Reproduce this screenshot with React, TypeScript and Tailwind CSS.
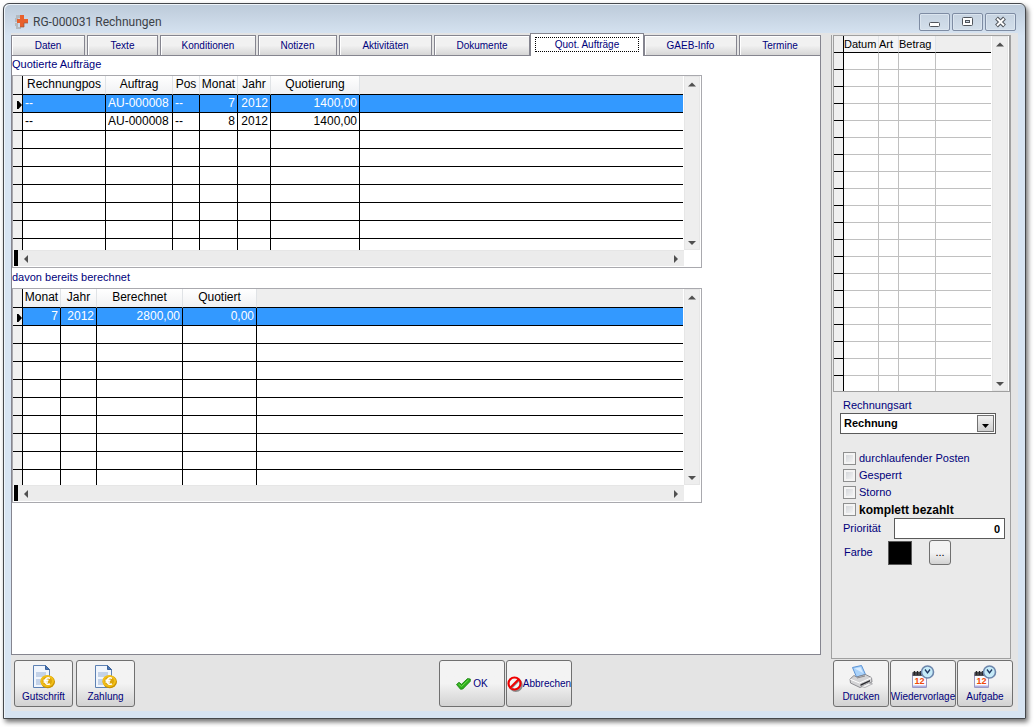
import React from "react";
import clsx from "clsx";

type Column = {
  title: string;
  width?: string;
  align?: string;
};

const tabs = [
  { title: "Daten", size: "basis-[74px] mr-0.5" },
  { title: "Texte", size: "basis-[71px] mr-0.5" },
  { title: "Konditionen", size: "basis-[96px] mr-0.5" },
  { title: "Notizen", size: "basis-[79px] mr-0.5" },
  { title: "Aktivitäten", size: "basis-[93px] mr-0.5" },
  { title: "Dokumente", size: "basis-[96px]" },
  { title: "Quot. Aufträge", size: "basis-[114px]", active: true },
  { title: "GAEB-Info", size: "basis-[93px] mr-0.5" },
  { title: "Termine", size: "basis-[82px]" },
];

const orderColumns: Column[] = [
  { title: "Rechnungpos", width: "w-[83px]", align: "text-left" },
  { title: "Auftrag", width: "w-[67px]", align: "text-left" },
  { title: "Pos", width: "w-[27px]", align: "text-left" },
  { title: "Monat", width: "w-[38px]", align: "text-right" },
  { title: "Jahr", width: "w-[33px]", align: "text-right" },
  { title: "Quotierung", width: "w-[89px]", align: "text-right" },
];

const orderRows = [
  ["--", "AU-000008", "--", "7", "2012", "1400,00"],
  ["--", "AU-000008", "--", "8", "2012", "1400,00"],
];

const billedColumns: Column[] = [
  { title: "Monat", width: "w-[38px]", align: "text-right" },
  { title: "Jahr", width: "w-[36px]", align: "text-right" },
  { title: "Berechnet", width: "w-[86px]", align: "text-right" },
  { title: "Quotiert", width: "w-[74px]", align: "text-right" },
];

const billedRows = [["7", "2012", "2800,00", "0,00"]];

const paymentColumns: Column[] = [
  { title: "Datum", width: "w-[35px]" },
  { title: "Art", width: "w-[20px]" },
  { title: "Betrag", width: "w-[37px]" },
];

const arrows = {
  up: "M0 5.5 L4 1.5 L8 5.5z",
  down: "M0 2 L8 2 L4 6z",
  left: "M6 0 L6 8 L2 4z",
  right: "M2 0 L2 8 L6 4z",
};

const ScrollArrow = ({ dir }: { dir: keyof typeof arrows }) => (
  <svg className="size-2 shrink-0" viewBox="0 0 8 8">
    <path d={arrows[dir]} fill="#505050" />
  </svg>
);

const VerticalBar = () => (
  <div className="flex w-4 shrink-0 flex-col items-center justify-between border border-[#e6e6e6] bg-[#eeeeee] pt-1 pb-0.5">
    <ScrollArrow dir="up" />
    <ScrollArrow dir="down" />
  </div>
);

const HorizontalBar = () => (
  <div className="mr-[17px] flex h-4 pl-px">
    <div className="w-1 bg-black" />
    <div className="flex grow items-center justify-between border-t border-[#e6e6e6] bg-[#ececec] px-1">
      <ScrollArrow dir="left" />
      <ScrollArrow dir="right" />
    </div>
  </div>
);

type DataGridProps = {
  label: string;
  columns: Column[];
  rows: string[][];
  emptyRows: number;
  lastRow: string;
};

const DataGrid = ({ label, columns, rows, emptyRows, lastRow }: DataGridProps) => {
  const total = rows.length + emptyRows;

  return (
    <div className="mr-[118px] border border-[#a9a9ae] bg-white pb-px">
      <div className="flex pr-px">
        <table
          aria-label={label}
          className="mr-px w-full table-fixed border-separate border-spacing-0 text-[12px] leading-[17px] text-black"
        >
          <thead>
            <tr className="h-[19px] bg-[#eeeeee]">
              <td className="w-2.5 border-r border-b border-black bg-[#f0f0f0] p-0" />
              {columns.map((column) => (
                <th
                  key={column.title}
                  scope="col"
                  className={clsx(
                    "border-r border-b border-r-[#e0e3e6] border-b-black bg-linear-to-b from-white to-[#f0f1f3] px-0 pt-0 pb-0.5 text-center leading-4 font-normal whitespace-nowrap",
                    column.width
                  )}
                >
                  {column.title}
                </th>
              ))}
              <td className="border-b border-black p-0" />
            </tr>
          </thead>
          <tbody>
            {Array.from({ length: total + 1 }, (_, r) => {
              const last = r === total;
              const line = last ? "border-black" : "border-b border-black";
              return (
                <tr
                  key={r}
                  className={clsx(
                    last ? lastRow : "h-[18px]",
                    r === 0 && "bg-[#3399ff] text-white"
                  )}
                >
                  <td className={clsx("border-r bg-[#f0f0f0] p-0", line)}>
                    {r === 0 && (
                      <svg className="mt-0.5 ml-1 h-2 w-[5px]" viewBox="0 0 5 8">
                        <path d="M0 0 L1.5 0 L5 4 L1.5 8 L0 8z" fill="#000" />
                      </svg>
                    )}
                  </td>
                  {columns.map((column, c) => (
                    <td
                      key={column.title}
                      className={clsx(
                        "border-r px-0.5 py-0 whitespace-nowrap",
                        line,
                        column.align
                      )}
                    >
                      {rows[r]?.[c]}
                    </td>
                  ))}
                  <td className={clsx("p-0", line)} />
                </tr>
              );
            })}
          </tbody>
        </table>
        <VerticalBar />
      </div>
      <HorizontalBar />
    </div>
  );
};

const PaymentGrid = () => (
  <div className="flex border border-[#a0a0a0] bg-white pr-px">
    <table
      aria-label="Zahlungen"
      className="mr-px w-full table-fixed border-separate border-spacing-0 text-[11px] leading-4 text-black"
    >
      <thead>
        <tr className="h-[17px] bg-[#eeeeee]">
          <td className="w-2.5 border-r border-b border-black p-0" />
          {paymentColumns.map((column) => (
            <th
              key={column.title}
              scope="col"
              className={clsx(
                "border-r border-b border-r-[#e0e3e6] border-b-black bg-[#f4f4f5] p-0 text-left font-normal",
                column.width
              )}
            >
              {column.title}
            </th>
          ))}
          <td className="border-b border-black p-0" />
        </tr>
      </thead>
      <tbody>
        {Array.from({ length: 20 }, (_, r) => {
          const last = r === 19;
          return (
            <tr key={r} className={last ? "h-[15px]" : "h-[17px]"}>
              <td
                className={clsx(
                  "border-r border-black bg-[#f0f0f0] p-0",
                  !last && "border-b"
                )}
              />
              {paymentColumns.map((column) => (
                <td
                  key={column.title}
                  className={clsx("border-r border-[#c0c0c0] p-0", !last && "border-b")}
                />
              ))}
              <td className={clsx("border-[#c0c0c0] p-0", !last && "border-b")} />
            </tr>
          );
        })}
      </tbody>
    </table>
    <VerticalBar />
  </div>
);

const LogoIcon = () => (
  <svg className="size-4" viewBox="0 0 16 16">
    <path d="M2 1h4v3H4v4H1V4h1z M1 9h3v4h3v2H2v-3H1z" fill="#b4b9be" />
    <path d="M6 1h4v4h4v4h-4v4H6V9H3V5h3z" fill="#e8602c" />
    <path d="M6 13h4V9h4" fill="none" stroke="#9a5a40" strokeWidth="0.7" />
  </svg>
);

const InvoiceIcon = () => (
  <svg className="size-6" viewBox="0 0 24 24">
    <path d="M1.5 0.5h12l4 4v18h-16z" fill="#f0f5fc" stroke="#5d81b3" />
    <path d="M13.5 0.5v4h4z" fill="#4a78b8" stroke="#3c639c" />
    <path d="M4 7h10v5H4z M4 14h5v6H4z" fill="#c3d2e8" />
    <ellipse cx="15.8" cy="16.8" rx="7.2" ry="6.4" fill="#c89200" />
    <ellipse cx="15.2" cy="16" rx="6.8" ry="6" fill="#f2bf18" />
    <ellipse cx="15.2" cy="16" rx="4.8" ry="4.300" fill="#dca60c" />
    <path
      d="M18 13.300c-3-1.500-5 .6-5 2.800s2 4.200 5 2.700 M11.500 15.300h5 M11.500 17h4.500"
      fill="none"
      stroke="#fff"
      strokeWidth="1.5"
    />
  </svg>
);

const CheckIcon = () => (
  <svg className="h-3 w-[15px]" viewBox="0 0 15 12">
    <path
      d="M0.5 6.5 L3 4.3 L5.5 6.3 L11.5 0.6 L14.3 1 L14.3 3.3 L6.8 11 L4.5 11.3z"
      fill="#2fae1c"
      stroke="#15800c"
      strokeWidth="0.8"
    />
    <path d="M2.5 6 L5.5 8.5 L12.5 1.8" fill="none" stroke="#6edb50" />
  </svg>
);

const ForbiddenIcon = () => (
  <svg className="size-4 shrink-0" viewBox="0 0 16 16">
    <circle cx="8.8" cy="9" r="6" fill="none" stroke="#8c8c8c" strokeWidth="2" />
    <circle cx="7.5" cy="7.5" r="6" fill="#f4f4f4" stroke="#f00000" strokeWidth="2.2" />
    <path d="M4.5 12.2 L12 4.8" stroke="#8c8c8c" strokeWidth="1.5" />
    <path d="M3.5 11.5 L11.5 3.5" stroke="#f00000" strokeWidth="2.2" />
  </svg>
);

const PrinterIcon = () => (
  <svg className="size-6" viewBox="0 0 24 24">
    <path d="M3.5 2.5 L12.5 0.5 L16.5 9.5 L7.5 12z" fill="#a9d2fa" stroke="#5b93d6" />
    <path d="M5.5 3.5 L11.5 2.2 L14 8z" fill="#d8ecff" />
    <path
      d="M1 14 L5 10.5 L7.5 12 L16.5 9.5 L22.5 12.5 L23 17 L11 22.5 L1.5 18z"
      fill="#d4d4d6"
      stroke="#77777c"
      strokeWidth="0.8"
    />
    <path d="M1.2 14.2 L10.5 18 L22.5 12.7" fill="none" stroke="#fff" />
    <path d="M11.5 19.3 L21 15 L21 16.5 L11.5 21z" fill="#2f2f33" />
    <path
      d="M12 21.5 L19.5 18 L23.5 18.8 L16 22.5z"
      fill="#f5f5f5"
      stroke="#8c8c90"
      strokeWidth="0.6"
    />
    <path d="M8 13 L16 11" stroke="#88888c" />
  </svg>
);

const ReminderIcon = () => (
  <svg className="size-6" viewBox="0 0 24 24">
    <path d="M1.5 8.5h14v14h-14z" fill="#fbfbff" stroke="#9a9ac4" />
    <path d="M1.500 7h14v4h-14z" fill="#505055" />
    <path d="M3.500 6v4 M6.500 6v4 M9.500 6v4" stroke="#26262a" strokeWidth="1.5" />
    <text
      x="8.5"
      y="19"
      textAnchor="middle"
      fontSize="9"
      fontWeight="bold"
      fontFamily="Liberation Sans, sans-serif"
      fill="#f04808"
    >
      12
    </text>
    <path d="M2 20.5h13v1.5H2z" fill="#b0aee0" />
    <circle cx="16.5" cy="7" r="6" fill="#c6ebf8" stroke="#6c86ac" strokeWidth="1.6" />
    <path d="M14 4.5 L16.5 8 L19 4.5" fill="none" stroke="#203860" strokeWidth="1.3" />
  </svg>
);

type ActionProps = {
  icon: React.ReactNode;
  text: string;
  className: string;
};

const ActionButton = ({ icon, text, className }: ActionProps) => (
  <button
    type="button"
    className={clsx(
      "flex h-[47px] items-center justify-center rounded-[3px] border border-[#707070] bg-linear-to-b from-[#f3f3f3] from-50% to-[#d2d2d2] text-[10px] leading-3 whitespace-nowrap text-[#00007b]",
      className
    )}
  >
    {icon}
    <span>{text}</span>
  </button>
);

const WindowButton = ({ label, children }: { label: string; children: React.ReactNode }) => (
  <button
    type="button"
    aria-label={label}
    className="flex h-[18px] w-[31px] items-center justify-center rounded-[2px] border border-[#7e8ca3] bg-linear-to-b from-[#c6d3e1] to-[#d3dfeb] shadow-[inset_0_0_0_1px_#dbe5ef]"
  >
    <svg className="h-3 w-[13px]" viewBox="0 0 13 12">
      {children}
    </svg>
  </button>
);

const CheckRow = ({ text, strong }: { text: string; strong?: boolean }) => (
  <label
    className={clsx(
      "flex h-[17px] items-center gap-[3px]",
      strong ? "text-[12px] font-bold text-black" : "text-[11px]"
    )}
  >
    <input
      type="checkbox"
      className="size-[13px] appearance-none border border-[#8e8f8f] bg-linear-to-br from-[#cdd0d4] to-[#fafafa] shadow-[inset_0_0_0_2px_#f4f4f4] checked:bg-[#00007b]"
    />
    {text}
  </label>
);

const SidePanel = () => (
  <aside className="mt-0.5 w-[180px] shrink-0 border border-t-0 border-[#a0a0a0] bg-[#eaeaea] pl-px text-[11px] text-[#00007b]">
    <PaymentGrid />
    <div className="pt-[5px] pr-[5px] pl-[7px]">
      <label htmlFor="kind" className="block pl-[3px] leading-4">
        Rechnungsart
      </label>
      <div className="relative mr-[9px]">
        <select
          id="kind"
          className="block h-[21px] w-full appearance-none border border-[#5a5a5a] bg-white pl-[3px] text-[11px] font-bold text-black"
        >
          <option>Rechnung</option>
        </select>
        <span className="pointer-events-none absolute top-0.5 right-0.5 flex h-[17px] w-[17px] items-center justify-center border border-[#707070] bg-linear-to-b from-[#f2f2f2] to-[#cfcfcf]">
          <svg className="mt-1 h-1 w-[7px]" viewBox="0 0 7 4">
            <path d="M0 0h7L3.5 4z" fill="#000" />
          </svg>
        </span>
      </div>
      <div className="mt-4 pl-[3px]">
        <CheckRow text="durchlaufender Posten" />
        <CheckRow text="Gesperrt" />
        <CheckRow text="Storno" />
        <CheckRow text="komplett bezahlt" strong />
      </div>
      <div className="flex items-center pl-[3px]">
        <label htmlFor="priority" className="w-[51px] shrink-0">
          Priorität
        </label>
        <input
          id="priority"
          defaultValue="0"
          className="h-[21px] w-full min-w-0 border border-[#5a5a5a] bg-white pr-1 text-right text-[11px] font-bold text-black"
        />
      </div>
      <div className="mt-px flex items-center pl-1">
        <label htmlFor="color" className="w-11">
          Farbe
        </label>
        <span className="size-6 border border-[#5a5a5a] bg-black" />
        <button
          id="color"
          type="button"
          className="ml-[17px] h-[25px] w-[22px] rounded-[3px] border border-[#707070] bg-linear-to-b from-[#f3f3f3] from-50% to-[#d2d2d2] text-black"
        >
          ...
        </button>
      </div>
    </div>
  </aside>
);

const App = () => {
  return (
    <div className="flex min-h-screen bg-white pt-[3px] pr-2 pb-2 pl-[3px] font-['Liberation_Sans',Arial,sans-serif]">
      <div className="flex min-w-0 grow flex-col rounded-t-md border border-[#45484c] bg-[linear-gradient(to_bottom,#bccad9,#d7e4f2_32px)] px-[7px] pb-[7px] shadow-[2px_3px_5px_#00000090,inset_1px_1px_0_#eef4fa]">
        {/* Title bar */}
        <header className="flex h-[29px] items-center pt-1.5 pr-0.5 pl-[3px]">
          <LogoIcon />
          <h1 className="ml-[3px] grow font-[Roboto,sans-serif] text-[12px] text-[#3c4248]">
            RG-000031 Rechnungen
          </h1>
          <div className="flex gap-0.5">
            <WindowButton label="Minimieren">
              <rect x="1.5" y="6.5" width="10" height="4" rx="1" fill="#fff" stroke="#50555c" />
            </WindowButton>
            <WindowButton label="Maximieren">
              <rect x="1.5" y="1.5" width="10" height="8" rx="1" fill="#fff" stroke="#50555c" />
              <rect x="4.5" y="4.5" width="4" height="2" fill="#c9d5e2" stroke="#50555c" />
            </WindowButton>
            <WindowButton label="Schließen">
              <path d="M2.5 2 L10.5 10 M10.5 2 L2.5 10" stroke="#50555c" strokeWidth="4" />
              <path d="M3 2.5 L10 9.5 M10 2.5 L3 9.5" stroke="#fff" strokeWidth="2" />
            </WindowButton>
          </div>
        </header>

        <div className="flex grow flex-col bg-[#e4e4e4] pb-1">
          <div className="flex grow gap-2.5">
            <main className="flex min-w-0 grow flex-col pb-1">
              {/* Tabs */}
              <div role="tablist" className="flex h-[22px] items-end">
                {tabs.map((tab) => (
                  <button
                    key={tab.title}
                    type="button"
                    role="tab"
                    aria-selected={!!tab.active}
                    className={clsx(
                      "shrink grow border border-b-0 border-[#85858f] text-[10px] whitespace-nowrap text-[#00007b]",
                      tab.size,
                      tab.active
                        ? "relative z-10 -mb-px h-[23px] bg-white px-1 pb-1"
                        : "h-5 bg-linear-to-b from-[#f1f1f1] from-50% to-[#d6d6d6] shadow-[inset_1px_1px_0_#ffffff]"
                    )}
                  >
                    {tab.active ? (
                      <span className="mt-[3px] block border border-dotted border-black leading-[13px]">
                        {tab.title}
                      </span>
                    ) : (
                      tab.title
                    )}
                  </button>
                ))}
              </div>

              <section className="grow border border-[#85858f] bg-white text-[11px] text-[#00007b]">
                <h2 className="pb-[3px] leading-4">Quotierte Aufträge</h2>
                <DataGrid
                  label="Quotierte Aufträge"
                  columns={orderColumns}
                  rows={orderRows}
                  emptyRows={6}
                  lastRow="h-[11px]"
                />
                <h2 className="pt-px pb-[3px] leading-4">davon bereits berechnet</h2>
                <DataGrid
                  label="davon bereits berechnet"
                  columns={billedColumns}
                  rows={billedRows}
                  emptyRows={8}
                  lastRow="h-[15px]"
                />
              </section>
            </main>
            <div className="flex pr-[7px]">
              <SidePanel />
            </div>
          </div>

          {/* Actions */}
          <footer className="flex justify-between pt-px pr-[5px] pl-[3px]">
            <div className="flex w-[164px] gap-[3px]">
              <ActionButton icon={<InvoiceIcon />} text="Gutschrift" className="w-[59px] flex-col gap-0.5" />
              <ActionButton icon={<InvoiceIcon />} text="Zahlung" className="w-[59px] flex-col gap-0.5" />
            </div>
            <div className="flex gap-px">
              <ActionButton icon={<CheckIcon />} text="OK" className="w-[66px] gap-0.5" />
              <ActionButton icon={<ForbiddenIcon />} text="Abbrechen" className="w-[66px]" />
            </div>
            <div className="flex gap-px">
              <ActionButton icon={<PrinterIcon />} text="Drucken" className="w-14 flex-col gap-0.5" />
              <ActionButton icon={<ReminderIcon />} text="Wiedervorlage" className="w-[66px] flex-col gap-0.5" />
              <ActionButton icon={<ReminderIcon />} text="Aufgabe" className="w-14 flex-col gap-0.5" />
            </div>
          </footer>
        </div>
      </div>
    </div>
  );
};

export default App;
